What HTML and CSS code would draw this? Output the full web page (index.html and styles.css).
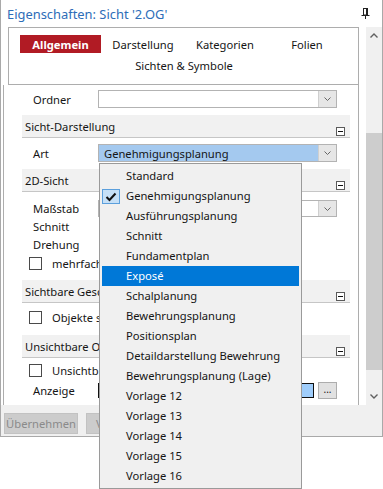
FILE: index.html
```html
<!DOCTYPE html>
<html lang="de">
<head>
<meta charset="utf-8">
<title>Eigenschaften</title>
<link rel="stylesheet" href="styles.css">
</head>
<body>
<div class="window">
  <div class="titlebar">
    <span class="title">Eigenschaften: Sicht '2.OG'</span>
    <svg class="pin" width="9" height="11" viewBox="0 0 9 11">
      <rect x="2.5" y="0.5" width="4" height="6.5" fill="none" stroke="#222"/>
      <line x1="5.5" y1="0" x2="5.5" y2="7" stroke="#222"/>
      <line x1="0.5" y1="7.5" x2="8.5" y2="7.5" stroke="#222"/>
      <line x1="4.5" y1="8" x2="4.5" y2="11" stroke="#222"/>
    </svg>
  </div>
  <div class="content">
    <div class="panel">
      <div class="tabs">
        <div class="tab active">Allgemein</div>
        <div class="tab">Darstellung</div>
        <div class="tab">Kategorien</div>
        <div class="tab">Folien</div>
        <div class="tab wide">Sichten &amp; Symbole</div>
      </div>
      <div class="grid">
        <div class="row r-ordner">
          <span class="label">Ordner</span>
          <div class="combo"><span class="value"></span><span class="btn"><svg width="7" height="4" viewBox="0 0 7 4"><polyline points="0.5,0.5 3.5,3.5 6.5,0.5" fill="none" stroke="#666"/></svg></span></div>
        </div>
        <div class="section s1"><span class="stext">Sicht-Darstellung</span><span class="minus"></span></div>
        <div class="row r-art">
          <span class="label">Art</span>
          <div class="combo selected"><span class="value">Genehmigungsplanung</span><span class="btn"><svg width="7" height="4" viewBox="0 0 7 4"><polyline points="0.5,0.5 3.5,3.5 6.5,0.5" fill="none" stroke="#666"/></svg></span></div>
        </div>
        <div class="section s2"><span class="stext">2D-Sicht</span><span class="minus"></span></div>
        <div class="row r-mass">
          <span class="label">Maßstab</span>
          <div class="combo short"><span class="value"></span><span class="btn"><svg width="7" height="4" viewBox="0 0 7 4"><polyline points="0.5,0.5 3.5,3.5 6.5,0.5" fill="none" stroke="#666"/></svg></span></div>
        </div>
        <div class="row r-plain"><span class="label">Schnitt</span></div>
        <div class="row r-plain"><span class="label">Drehung</span></div>
        <div class="row check r-mehr"><span class="box"></span><span class="ctext">mehrfach</span></div>
        <div class="section s3"><span class="stext">Sichtbare Gesc</span><span class="minus"></span></div>
        <div class="row check r-obj"><span class="box"></span><span class="ctext">Objekte s</span></div>
        <div class="section s4"><span class="stext">Unsichtbare O</span><span class="minus"></span></div>
        <div class="row check r-uns"><span class="box"></span><span class="ctext">Unsichtb</span></div>
        <div class="row r-anz">
          <span class="label">Anzeige</span>
          <span class="swatch"></span>
          <span class="dots">...</span>
        </div>
      </div>
    </div>
    <div class="scrollbar">
      <div class="sbtn"><svg width="8" height="5" viewBox="0 0 8 5"><polyline points="0.5,4.5 4,1 7.5,4.5" fill="none" stroke="#606060" stroke-width="1.4"/></svg></div>
      <div class="track"><div class="thumb"></div></div>
      <div class="sbtn"><svg width="8" height="5" viewBox="0 0 8 5"><polyline points="0.5,0.5 4,4 7.5,0.5" fill="none" stroke="#606060" stroke-width="1.4"/></svg></div>
    </div>
  </div>
  <div class="footer">
    <button class="fbtn">Übernehmen</button>
    <button class="fbtn partial">V</button>
  </div>
</div>
<div class="dropdown">
  <div class="item">Standard</div>
  <div class="item checked"><span class="chk"><svg width="12" height="10" viewBox="0 0 12 10"><polyline points="1.5,5 4.5,8 10.5,1.5" fill="none" stroke="#111" stroke-width="2"/></svg></span>Genehmigungsplanung</div>
  <div class="item">Ausführungsplanung</div>
  <div class="item">Schnitt</div>
  <div class="item">Fundamentplan</div>
  <div class="item hot">Exposé</div>
  <div class="item">Schalplanung</div>
  <div class="item">Bewehrungsplanung</div>
  <div class="item">Positionsplan</div>
  <div class="item">Detaildarstellung Bewehrung</div>
  <div class="item">Bewehrungsplanung (Lage)</div>
  <div class="item">Vorlage 12</div>
  <div class="item">Vorlage 13</div>
  <div class="item">Vorlage 14</div>
  <div class="item">Vorlage 15</div>
  <div class="item">Vorlage 16</div>
</div>
</body>
</html>
```
FILE: styles.css
```css
* { box-sizing: border-box; }
html, body { margin: 0; padding: 0; background: #fff; }
body {
  position: relative;
  width: 383px;
  height: 489px;
  overflow: hidden;
  font-family: "Noto Sans", "Segoe UI", sans-serif;
  font-size: 11.2px;
  color: #151515;
}
.window {
  width: 383px;
  height: 437px;
  border: 1px solid #a9a9a9;
  border-top: none;
  display: flex;
  flex-direction: column;
}
.titlebar {
  height: 27px;
  display: flex;
  align-items: center;
  justify-content: space-between;
  padding: 0 12px 0 6px;
}
.title { font-size: 12.9px; color: #2d6db8; }
.pin { display: block; }
.content { display: flex; height: 378px; }
.panel { width: 358px; display: flex; flex-direction: column; }
.tabs {
  margin-left: 7px;
  height: 58px;
  border: 1px solid #adadad;
  padding: 7px 0 0 11px;
  display: grid;
  grid-template-columns: repeat(4, 82px);
  grid-auto-rows: 18px;
  row-gap: 3px;
}
.tab { display: flex; align-items: center; justify-content: center; white-space: nowrap; }
.tab.active { background: #b11b24; color: #fff; font-weight: bold; width: 81px; }
.tab.wide { grid-column: 1 / 5; }
.grid {
  flex: 1;
  margin-left: 2px;
  border-left: 1px solid #adadad;
  border-right: 1px solid #adadad;
  display: flex;
  flex-direction: column;
}
.row { display: flex; align-items: center; height: 18px; padding-left: 29px; white-space: nowrap; }
.label { width: 65px; flex: none; }
.combo {
  width: 239px;
  height: 18px;
  border: 1px solid #b3b3b3;
  display: flex;
  background: #fff;
}
.combo .value { flex: 1; padding-left: 5px; display: flex; align-items: center; }
.combo.selected .value { background: #a4c9ef; }
.combo .btn {
  width: 18px;
  background: #e6e6e6;
  border-left: 1px solid #cfcfcf;
  display: flex;
  align-items: center;
  justify-content: center;
}
.combo .btn svg { display: block; }
.combo.short { height: 17px; }
.r-ordner { margin-top: 5px; }
.r-art { margin-top: 6px; }
.r-mass { margin-top: 8px; height: 17px; }
.r-mehr { margin-top: 1px; }
.r-obj { margin-top: 5px; }
.r-uns { margin-top: 3px; }
.r-anz { margin-top: 2px; }
.ctext { white-space: nowrap; }
.section {
  margin-left: 18px;
  width: 328px;
  height: 23px;
  background: #f1f1f1;
  border-bottom: 1px solid #c6c6c6;
  display: flex;
  justify-content: space-between;
  padding: 0 5px 0 3px;
  white-space: nowrap;
}
.stext { align-self: center; }
.minus {
  align-self: flex-end;
  margin-bottom: 1px;
  width: 9px;
  height: 9px;
  border: 1px solid #5a5a5a;
  position: relative;
  background: #fff;
}
.minus::after {
  content: "";
  position: absolute;
  left: 1px;
  top: 3px;
  width: 5px;
  height: 1px;
  background: #111;
}
.s1 { margin-top: 7px; }
.s2 { margin-top: 7px; }
.s3 { margin-top: 8px; }
.s4 { margin-top: 9px; }
.check { padding-left: 25px; }
.box { width: 13px; height: 13px; border: 1px solid #4a4a4a; background: #fff; flex: none; margin-right: 10px; }
.swatch { width: 216px; height: 15px; border: 1px solid #111; background: #9fcdfb; }
.dots {
  margin-left: 4px;
  width: 19px;
  height: 17px;
  background: #e1e1e1;
  border: 1px solid #adadad;
  display: flex;
  align-items: center;
  justify-content: center;
  font-size: 10px;
  padding-bottom: 3px;
}
.scrollbar {
  margin-left: 7px;
  width: 16px;
  background: #f0f0f0;
  display: flex;
  flex-direction: column;
}
.sbtn { height: 17px; display: flex; align-items: center; justify-content: center; }
.sbtn svg { display: block; }
.track { flex: 1; }
.thumb { margin-top: 89px; height: 237px; background: #cdcdcd; }
.footer {
  flex: 1;
  background: #f0f0f0;
  display: flex;
  align-items: flex-start;
  padding: 8px 0 0 3px;
  gap: 8px;
}
.fbtn {
  font-family: inherit;
  font-size: 11.2px;
  width: 74px;
  height: 21px;
  background: #cccccc;
  border: 1px solid #c2c2c2;
  color: #8a8a8a;
  padding: 0;
}
.fbtn.partial {
  width: 14px;
  border-right: none;
  text-align: left;
  padding-left: 9px;
}
.dropdown {
  position: absolute;
  left: 99px;
  top: 163px;
  width: 203px;
  height: 326px;
  background: #f0f0f0;
  border: 1px solid #9a9a9a;
  padding: 2px;
}
.item {
  position: relative;
  height: 20px;
  line-height: 20px;
  padding-left: 24px;
  white-space: nowrap;
}
.item.hot { background: #0078d7; color: #fff; }
.chk {
  position: absolute;
  left: 0;
  top: 3px;
  width: 18px;
  height: 15px;
  background: #c6e0f7;
  border: 1px solid #5b9fdc;
  display: flex;
  align-items: center;
  justify-content: center;
}
.chk svg { display: block; }
```
